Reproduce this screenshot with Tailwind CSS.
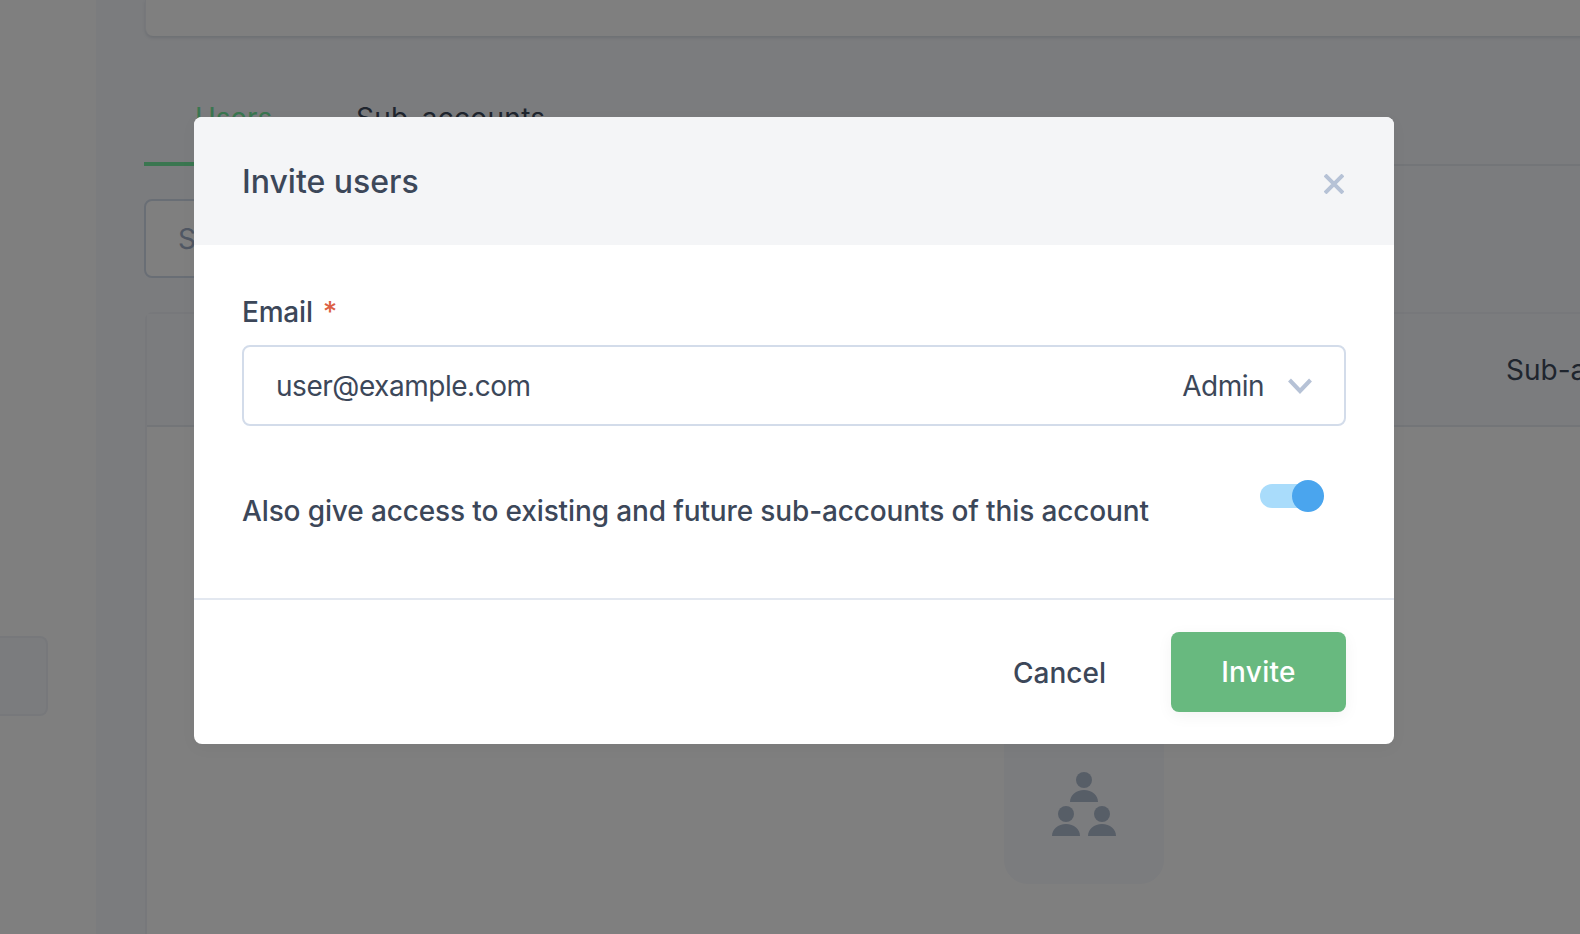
<!DOCTYPE html>
<html>
<head>
<meta charset="utf-8">
<script src="https://cdn.jsdelivr.net/npm/@tailwindcss/browser@4"></script>
</head>
<body class="font-['Inter','Liberation_Sans',sans-serif]">
<div class="relative flex h-[934px] w-[1580px] overflow-hidden bg-white">
  <aside class="w-24 shrink-0 bg-white pt-[636px]">
    <div class="h-20 w-12 rounded-r-lg border-2 border-l-0 border-[#eef1f6] bg-[#f6f8fc]"></div>
  </aside>
  <main class="min-w-0 flex-1 bg-[#f6f8fc] pl-[49px]">
    <div class="h-[36px] w-[1500px] rounded-b-lg border-l border-[#eef1f6] bg-white shadow-[0_2px_3px_rgba(100,116,139,0.18)]"></div>
    <div class="mt-[65px] flex h-[65px] w-[1500px] -translate-x-px items-start border-b-2 border-[#e6eaf1] text-[28px] leading-[34px]">
      <div class="h-[65px] w-[176px] border-b-4 border-[#74eca0] pl-[51px] text-[#74eca0]">Users</div>
      <div class="pl-[36px] tracking-[0.3px] text-[#3f4a5c]">Sub-accounts</div>
    </div>
    <div class="mt-[33px] flex h-[79px] w-[400px] -translate-x-px items-center rounded-lg border-2 border-[#d3dcea] bg-white pl-[32px] text-[28px] text-[#a0aec6]">Search</div>
    <section class="mt-[34px] w-[1878px] rounded-lg border-2 border-[#eef1f6] bg-white pb-[200px]">
      <div class="flex h-[113px] items-center border-b-2 border-[#e6eaf1] bg-[#f6f8fc] pl-[1359px] text-[28px] text-[#3f4a5c]">Sub-accounts</div>
      <div class="mx-auto mt-[297px] flex h-[160px] w-[160px] items-end justify-center rounded-b-3xl bg-[#f6f8fc] pb-[48px]">
        <svg class="h-[64px] w-[64px]" viewBox="0 0 64 64" fill="#aebccf">
          <circle cx="32" cy="8" r="8"/><path d="M18 30c0-7 6-12 14-12s14 5 14 12z"/>
          <circle cx="14" cy="42" r="8"/><path d="M0 64c0-7 6-12 14-12s14 5 14 12z"/>
          <circle cx="50" cy="42" r="8"/><path d="M36 64c0-7 6-12 14-12s14 5 14 12z"/>
        </svg>
      </div>
    </section>
  </main>
  <div class="absolute inset-0 bg-black/50"></div>
  <div class="absolute left-[194px] top-[117px] w-[1200px] overflow-hidden rounded-lg bg-white text-[#3c4759] shadow-[0_4px_16px_rgba(0,0,0,0.04)]">
    <header class="flex h-[128px] items-center justify-between bg-[#f4f5f7] px-[48px]">
      <h2 class="mt-[2px] text-[32px] font-medium">Invite users</h2>
      <svg class="mr-[2px] mt-[6px] h-5 w-5" viewBox="0 0 20 20" fill="none" stroke="#b6c2d6" stroke-width="4"><path d="M1 1 19 19M19 1 1 19"/></svg>
    </header>
    <div class="px-[48px] pt-[49px]">
      <div class="flex h-[35px] items-center text-[28px] font-medium tracking-[-0.2px]">Email<span class="ml-[10px] text-[#dc5f45]">*</span></div>
      <div class="mt-[16px] flex h-[81px] items-center justify-between rounded-lg border-2 border-[#d3dcea] pl-[32px] pr-[32px] text-[28px]">
        <span class="tracking-[-0.47px]">user@example.com</span>
        <span class="flex items-center gap-[24px] tracking-[-0.5px]">Admin
          <svg class="h-4 w-6" viewBox="0 0 24 16" fill="none" stroke="#b6c2d6" stroke-width="4"><path d="M1.5 2 12 13 22.5 2"/></svg>
        </span>
      </div>
      <div class="mt-[54px] flex h-[64px] items-start justify-between pr-[22px]">
        <span class="pt-[11px] text-[28px] font-medium leading-[40px] tracking-[-0.13px]">Also give access to existing and future sub-accounts of this account</span>
        <span class="relative block h-8 w-16 shrink-0">
          <span class="absolute left-0 top-1 block h-6 w-[56px] rounded-full bg-[#a9dcfb]"></span>
          <span class="absolute right-0 top-0 block h-8 w-8 rounded-full bg-[#4aa5ee]"></span>
        </span>
      </div>
    </div>
    <footer class="mt-[54px] flex h-[146px] items-center justify-end gap-[65px] border-t-2 border-[#e3e8f0] px-[48px] text-[28px]">
      <button class="pt-[2px] font-medium">Cancel</button>
      <button class="h-20 w-[175px] rounded-lg bg-[#68b97f] font-medium tracking-[0.3px] text-white shadow-[0_4px_16px_rgba(0,0,0,0.05)]">Invite</button>
    </footer>
  </div>
</div>
</body>
</html>
